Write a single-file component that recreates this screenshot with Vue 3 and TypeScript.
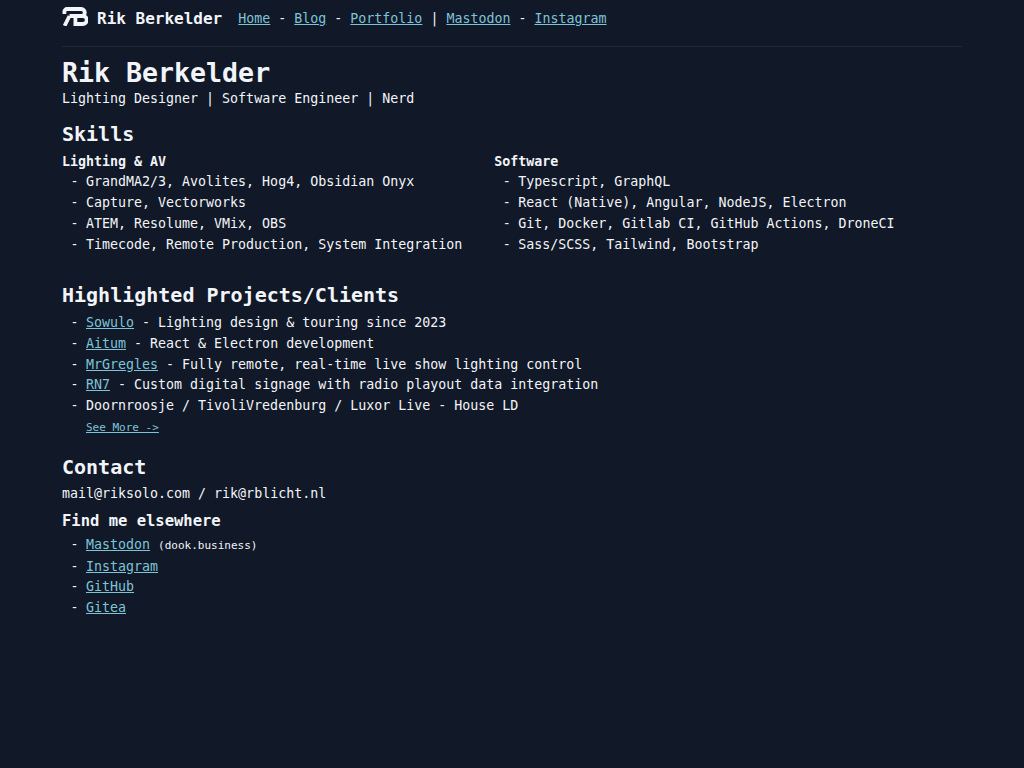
<script setup lang="ts">
const nav = [
  { label: 'Home', sep: '-' },
  { label: 'Blog', sep: '-' },
  { label: 'Portfolio', sep: '|' },
  { label: 'Mastodon', sep: '-' },
  { label: 'Instagram', sep: '' },
]
const skills = [
  {
    title: 'Lighting & AV',
    items: [
      'GrandMA2/3, Avolites, Hog4, Obsidian Onyx',
      'Capture, Vectorworks',
      'ATEM, Resolume, VMix, OBS',
      'Timecode, Remote Production, System Integration',
    ],
  },
  {
    title: 'Software',
    items: [
      'Typescript, GraphQL',
      'React (Native), Angular, NodeJS, Electron',
      'Git, Docker, Gitlab CI, GitHub Actions, DroneCI',
      'Sass/SCSS, Tailwind, Bootstrap',
    ],
  },
]
const projects = [
  { link: 'Sowulo', text: ' - Lighting design & touring since 2023' },
  { link: 'Aitum', text: ' - React & Electron development' },
  { link: 'MrGregles', text: ' - Fully remote, real-time live show lighting control' },
  { link: 'RN7', text: ' - Custom digital signage with radio playout data integration' },
  { link: '', text: 'Doornroosje / TivoliVredenburg / Luxor Live - House LD' },
]
</script>

<template>
  <div class="page">
    <header class="topbar">
      <svg class="logo" viewBox="0 0 26 19" width="26" height="19" aria-hidden="true">
        <path
          fill="none"
          stroke="#f1f5f9"
          stroke-width="3.8"
          d="M2.4 7V4.6A2.6 2.6 0 0 1 5 2h14.3a3.5 3.5 0 0 1 0 7H7.5M7.5 9L2.6 18.8M13.4 9h7.4a3.9 3.9 0 0 1 0 8H13.4V9"
        />
      </svg>
      <span class="brand">Rik Berkelder</span>
      <nav class="nav">
        <template v-for="n in nav" :key="n.label">
          <a href="#">{{ n.label }}</a><span v-if="n.sep" class="sep">{{ n.sep }}</span>
        </template>
      </nav>
    </header>

    <main>
      <h1>Rik Berkelder</h1>
      <p class="tagline">Lighting Designer | Software Engineer | Nerd</p>

      <h2 class="skills-title">Skills</h2>
      <div class="skills">
        <div v-for="s in skills" :key="s.title">
          <div class="subhead">{{ s.title }}</div>
          <ul>
            <li v-for="i in s.items" :key="i">{{ i }}</li>
          </ul>
        </div>
      </div>

      <h2 class="projects-title">Highlighted Projects/Clients</h2>
      <ul>
        <li v-for="p in projects" :key="p.text"><a v-if="p.link" href="#">{{ p.link }}</a>{{ p.text }}</li>
      </ul>
      <a class="more" href="#">See More -&gt;</a>

      <h2 class="contact-title">Contact</h2>
      <p class="mail">mail@riksolo.com / rik@rblicht.nl</p>
      <h3>Find me elsewhere</h3>
      <ul>
        <li><a href="#">Mastodon</a> <small>(dook.business)</small></li>
        <li><a href="#">Instagram</a></li>
        <li><a href="#">GitHub</a></li>
        <li><a href="#">Gitea</a></li>
      </ul>
    </main>
  </div>
</template>

<style>
html, body {
  background: #111827;
}
</style>

<style scoped>
.page {
  box-sizing: border-box;
  width: 900px;
  margin-left: 62px;
  min-height: 768px;
  color: #f1f5f9;
  font-family: "DejaVu Sans Mono", monospace;
  font-size: 13.3px;
  line-height: 20.8px;
}
.topbar {
  display: flex;
  align-items: center;
  height: 47px;
  padding-bottom: 7px;
  box-sizing: border-box;
  border-bottom: 1px solid #1e293b;
}
.logo { flex: none; margin-right: 9px; margin-top: -7px; }
.brand { font-size: 16px; font-weight: 700; margin-right: 16px; }
.nav { display: flex; }
.sep { margin: 0 8px; }
a { color: #7dc4d8; text-decoration: underline; }
h1, h2, h3, p, ul { margin: 0; padding: 0; }
h1 { font-size: 26.6px; line-height: 32px; font-weight: 700; margin-top: 10px; }
h2 { font-size: 20px; line-height: 28px; font-weight: 700; }
h3 { font-size: 15.5px; line-height: 24px; font-weight: 700; margin: 4px 0 1.85px; }
.tagline { line-height: 20px; }
.skills-title { margin-top: 11px; }
.skills { display: flex; gap: 32px; margin-top: 4.3px; }
.subhead { font-weight: 700; line-height: 20px; }
ul { list-style: none; }
li { padding-left: 24px; position: relative; }
li::before { content: "-"; position: absolute; left: 8.5px; }
.projects-title { margin: 25.7px 0 3.75px; }
.more { display: block; margin: 1.25px 0 0 24px; font-size: 11px; line-height: 20px; width: max-content; }
.contact-title { margin-top: 15px; }
.mail { margin-top: 3px; }
small { font-size: 11px; }
</style>
